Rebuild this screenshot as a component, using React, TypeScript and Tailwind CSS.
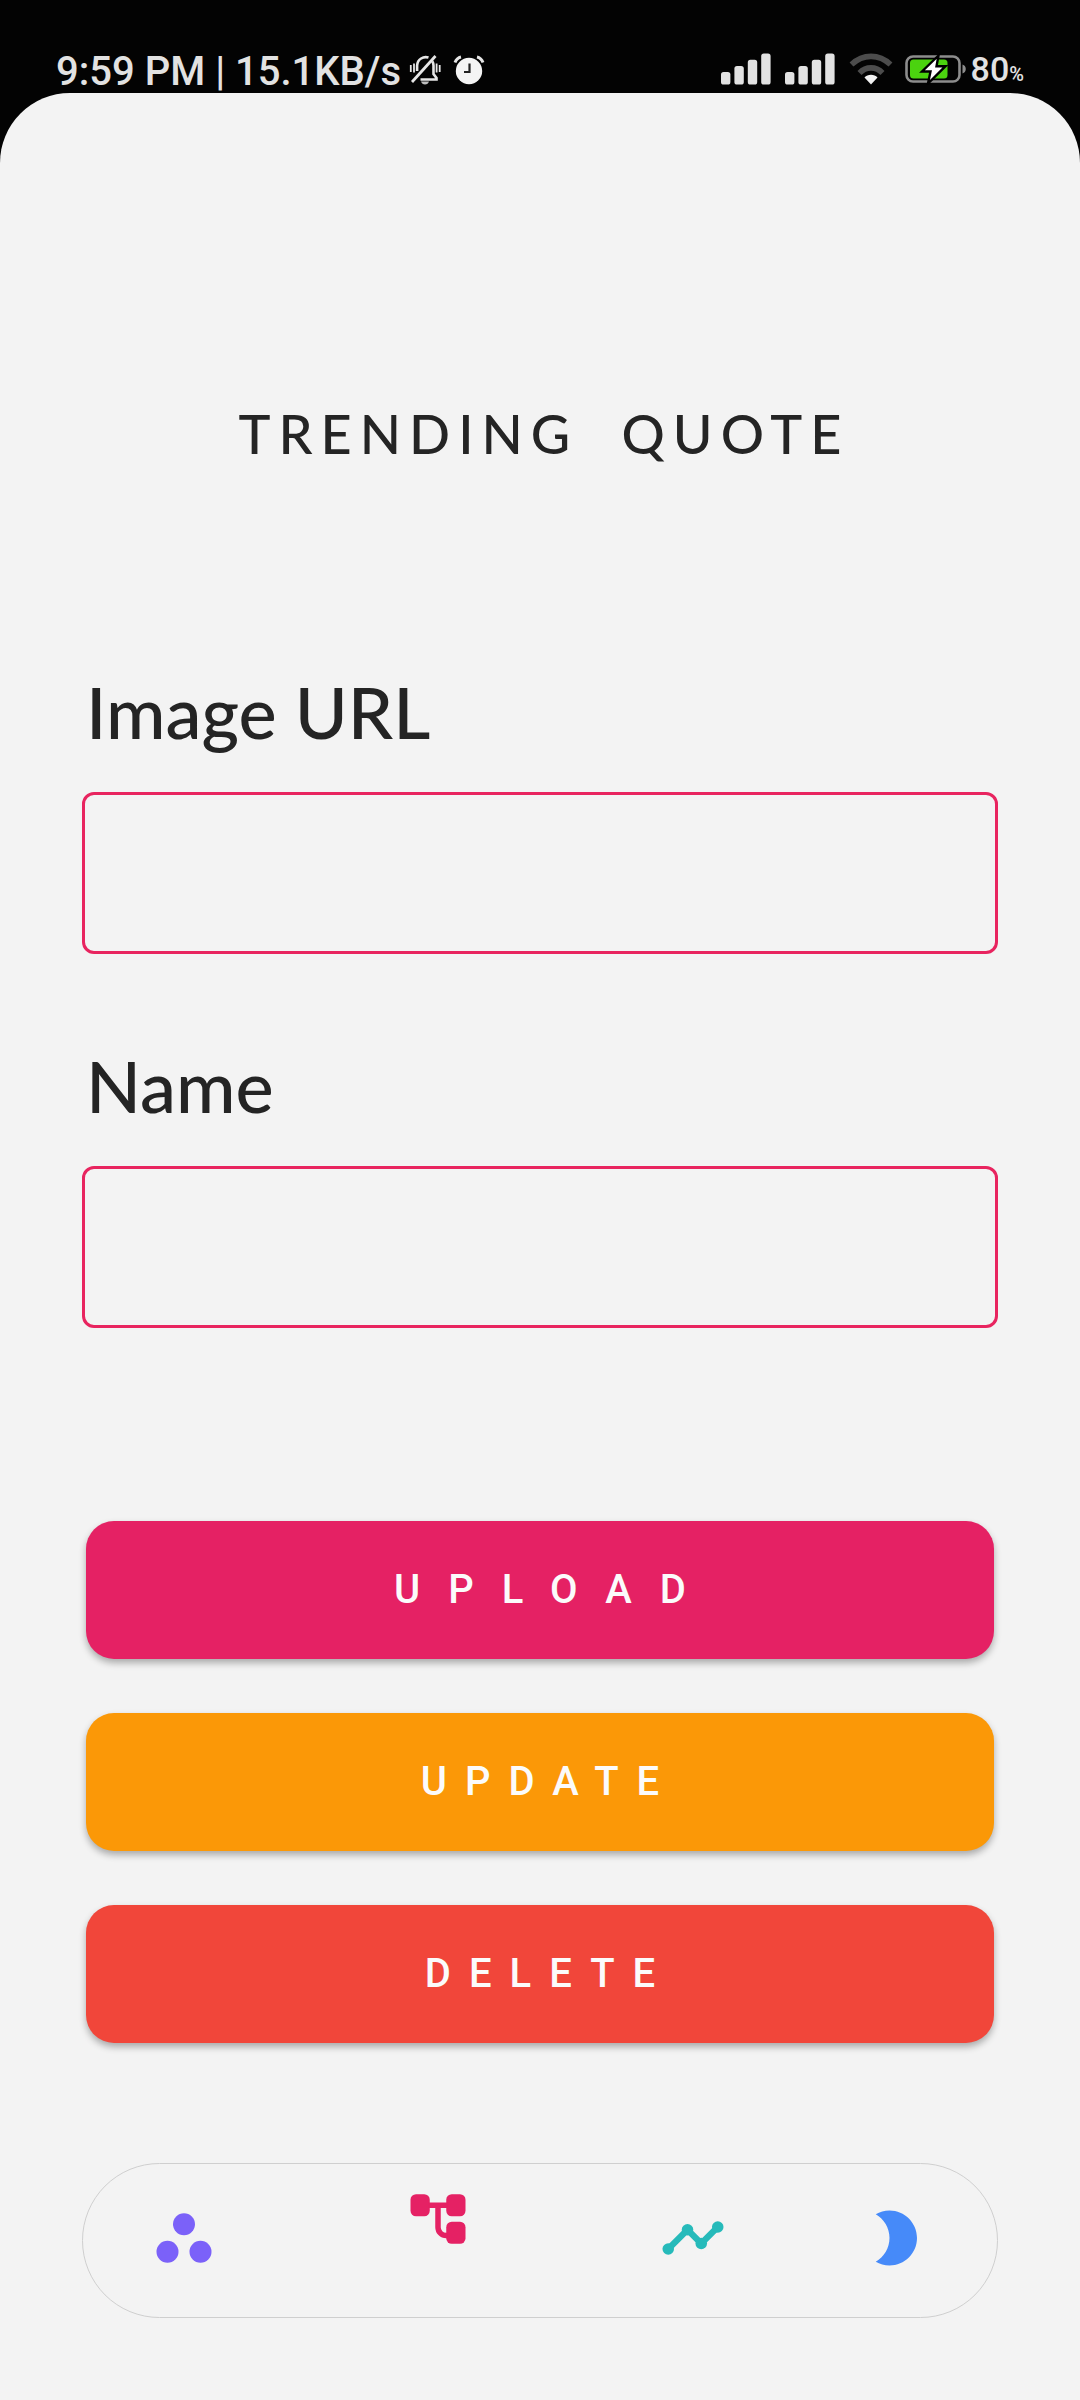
import React from "react";

function SignalBars() {
  return (
    <svg className="h-8 w-[50px]" viewBox="0 0 50 32" fill="#e2e2e2" aria-hidden="true">
      <rect x="0" y="19" width="9.4" height="12.5" rx="2.6" />
      <rect x="13.4" y="13" width="9.4" height="18.5" rx="2.6" />
      <rect x="26.8" y="6.8" width="9.4" height="24.7" rx="2.6" />
      <rect x="40.2" y="0.4" width="9.4" height="31.1" rx="2.6" />
    </svg>
  );
}

function WifiIcon() {
  return (
    <svg className="h-8 w-11" viewBox="0 0 44 32" fill="none" aria-hidden="true">
      <path d="M2.5 11.5C14 0.6 30 0.6 41.5 11.5" stroke="#4c4c4c" strokeWidth="5.6" />
      <path d="M10.5 20C17 13.2 27 13.2 33.5 20" stroke="#4c4c4c" strokeWidth="5.6" />
      <path d="M15.5 24.5C18.5 20.8 25.5 20.8 28.5 24.5L22 31.5Z" fill="#f2f2f2" />
    </svg>
  );
}

function BatteryIcon() {
  return (
    <svg className="h-8 w-[62px]" viewBox="0 0 62 32" aria-hidden="true">
      <rect x="1.5" y="3.5" width="53" height="25" rx="6.5" fill="none" stroke="#8d8d8d" strokeWidth="2.6" />
      <path d="M57.5 11.5c2 .6 3.3 2.2 3.3 4.5s-1.3 3.9-3.3 4.5z" fill="#8d8d8d" />
      <rect x="5" y="6.5" width="37.5" height="19" rx="3.5" fill="#4bd30f" />
      <path d="M33.5 2.5L17 18.5h8.5L23 30.5l17.5-17.3h-9z" fill="#fff" stroke="#000" strokeWidth="2.4" />
    </svg>
  );
}

function BellOffIcon() {
  return (
    <svg className="h-8 w-8" viewBox="0 0 32 32" fill="none" stroke="#e6e6e6" strokeWidth="2.6" aria-hidden="true">
      <path d="M11.5 25.5H27.5V24l-3-4v-8.5c0-1.5-.4-3-1.2-4.3M19.5 3.6c-5-1.6-11 1.4-11.4 8V17" />
      <path d="M1.8 11v7M5 9.5v9M27.6 9.5v9M30.7 11v7" strokeWidth="1.8" />
      <path d="M3 28L26.5 2" strokeWidth="2.8" />
      <path d="M12 27.5h8c-.6 2-2 3-4 3s-3.4-1-4-3z" fill="#bdbdbd" stroke="none" />
    </svg>
  );
}

function AlarmIcon() {
  return (
    <svg className="h-8 w-8" viewBox="0 0 32 32" fill="none" aria-hidden="true">
      <circle cx="16" cy="17" r="13.2" fill="#f4f4f4" />
      <path d="M2 8.5C3.2 5.5 5.2 3.6 8 3M30 8.5C28.8 5.5 26.8 3.6 24 3" stroke="#e6e6e6" strokeWidth="3" />
      <path d="M16.5 9.5V18H11" stroke="#222" strokeWidth="2.2" />
    </svg>
  );
}

function StatusBar() {
  return (
    <header className="flex h-[93px] items-end justify-between px-14 font-medium text-[#e2e2e2]">
      <div className="flex h-[42px] items-center">
        <span className="text-[40px] leading-[42px] whitespace-nowrap">9:59 PM | 15.1KB/s</span>
        <span className="ml-2 flex items-center gap-3 pb-1">
          <BellOffIcon />
          <AlarmIcon />
        </span>
      </div>
      <div className="flex h-[44px] items-center pb-1">
        <SignalBars />
        <span className="ml-[14px]">
          <SignalBars />
        </span>
        <span className="ml-[14px]">
          <WifiIcon />
        </span>
        <span className="ml-3">
          <BatteryIcon />
        </span>
        <span className="ml-1 flex items-baseline pt-1 leading-8">
          <span className="text-[34px]">80</span>
          <span className="text-[20px]">%</span>
        </span>
      </div>
    </header>
  );
}

function Field({ id, label }: { id: string; label: string }) {
  return (
    <div className="flex flex-col gap-10">
      <label htmlFor={id} className="pl-1 font-['Lato',sans-serif] text-[72px] leading-[82px] font-medium text-[#242424]">
        {label}
      </label>
      <input
        id={id}
        type="text"
        className="h-[162px] w-full rounded-xl border-3 border-[#e8245f] bg-transparent px-8 text-5xl text-[#242424] outline-none"
      />
    </div>
  );
}

const actions = [
  { label: "UPLOAD", style: "bg-[#e52164] pl-7 tracking-[28px]" },
  { label: "UPDATE", style: "bg-[#fb9807] pl-[18px] tracking-[18px]" },
  { label: "DELETE", style: "bg-[#f1463a] pl-[18px] tracking-[18px]" },
];

function NavBar() {
  return (
    <nav className="grid h-[155px] grid-cols-[254fr_255fr_202fr_66px] items-center rounded-full border border-[#cfcfcf] pr-[69px] pl-[68px]">
      <button type="button" aria-label="Quotes" className="w-[66px] pb-1.5">
        <svg className="size-[66px]" viewBox="0 0 24 24" fill="#7b61f9">
          <circle cx="12" cy="7" r="4" />
          <circle cx="6" cy="17" r="4" />
          <circle cx="18" cy="17" r="4" />
        </svg>
      </button>
      <button type="button" aria-label="Categories" aria-current="page" className="w-[66px] pb-11">
        <svg className="size-[66px]" viewBox="0 0 24 24" fill="#e52164">
          <rect x="2" y="3" width="7" height="8" rx="2" />
          <rect x="15" y="3" width="7" height="8" rx="2" />
          <rect x="15" y="13" width="7" height="8" rx="2" />
          <path d="M8.5 7h7M12 7v8c0 1.7 1.3 3 3 3h.5" fill="none" stroke="#e52164" strokeWidth="2" />
        </svg>
      </button>
      <button type="button" aria-label="Trending" className="w-[66px] pb-1.5">
        <svg className="size-[66px]" viewBox="0 0 24 24" fill="#26baba">
          <path d="M3 16L10 9l5 5 6-6" fill="none" stroke="#26baba" strokeWidth="2.3" />
          <circle cx="3" cy="16" r="2.1" />
          <circle cx="10" cy="9" r="2.1" />
          <circle cx="15" cy="14" r="2.1" />
          <circle cx="21" cy="8" r="2.1" />
        </svg>
      </button>
      <button type="button" aria-label="Dark mode" className="w-[66px] pb-1.5">
        <svg className="size-[66px]" viewBox="0 0 24 24" fill="#468af9">
          <path d="M10 2c-1.82 0-3.53.5-5 1.35C7.99 5.08 10 8.3 10 12s-2.01 6.92-5 8.65C6.47 21.5 8.18 22 10 22c5.52 0 10-4.48 10-10S15.52 2 10 2z" />
        </svg>
      </button>
    </nav>
  );
}

export default function App() {
  return (
    <div className="flex min-h-screen flex-col bg-[#030303] font-['Roboto',sans-serif]">
      <StatusBar />
      <main className="flex flex-1 flex-col rounded-t-[70px] bg-[#f3f3f3] px-[82px] pt-[311px] pb-[82px]">
        <h1 className="pl-2 text-center font-['Lato',sans-serif] text-[54px] leading-[60px] font-medium tracking-[8px] whitespace-pre-wrap text-[#242424]">
          {"TRENDING  QUOTE"}
        </h1>
        <form className="mt-[206px]" onSubmit={(e) => e.preventDefault()}>
          <div className="flex flex-col gap-[90px]">
            <Field id="image-url" label="Image URL" />
            <Field id="name" label="Name" />
          </div>
          <div className="mt-[193px] flex flex-col gap-[54px] px-1">
            {actions.map((action) => (
              <button
                key={action.label}
                type="button"
                className={`h-[138px] w-full rounded-[28px] text-[40px] font-medium text-[#fbfbfb] shadow-[0_4px_7px_rgba(0,0,0,0.3)] ${action.style}`}
              >
                {action.label}
              </button>
            ))}
          </div>
        </form>
        <div className="mt-[120px]">
          <NavBar />
        </div>
      </main>
    </div>
  );
}
